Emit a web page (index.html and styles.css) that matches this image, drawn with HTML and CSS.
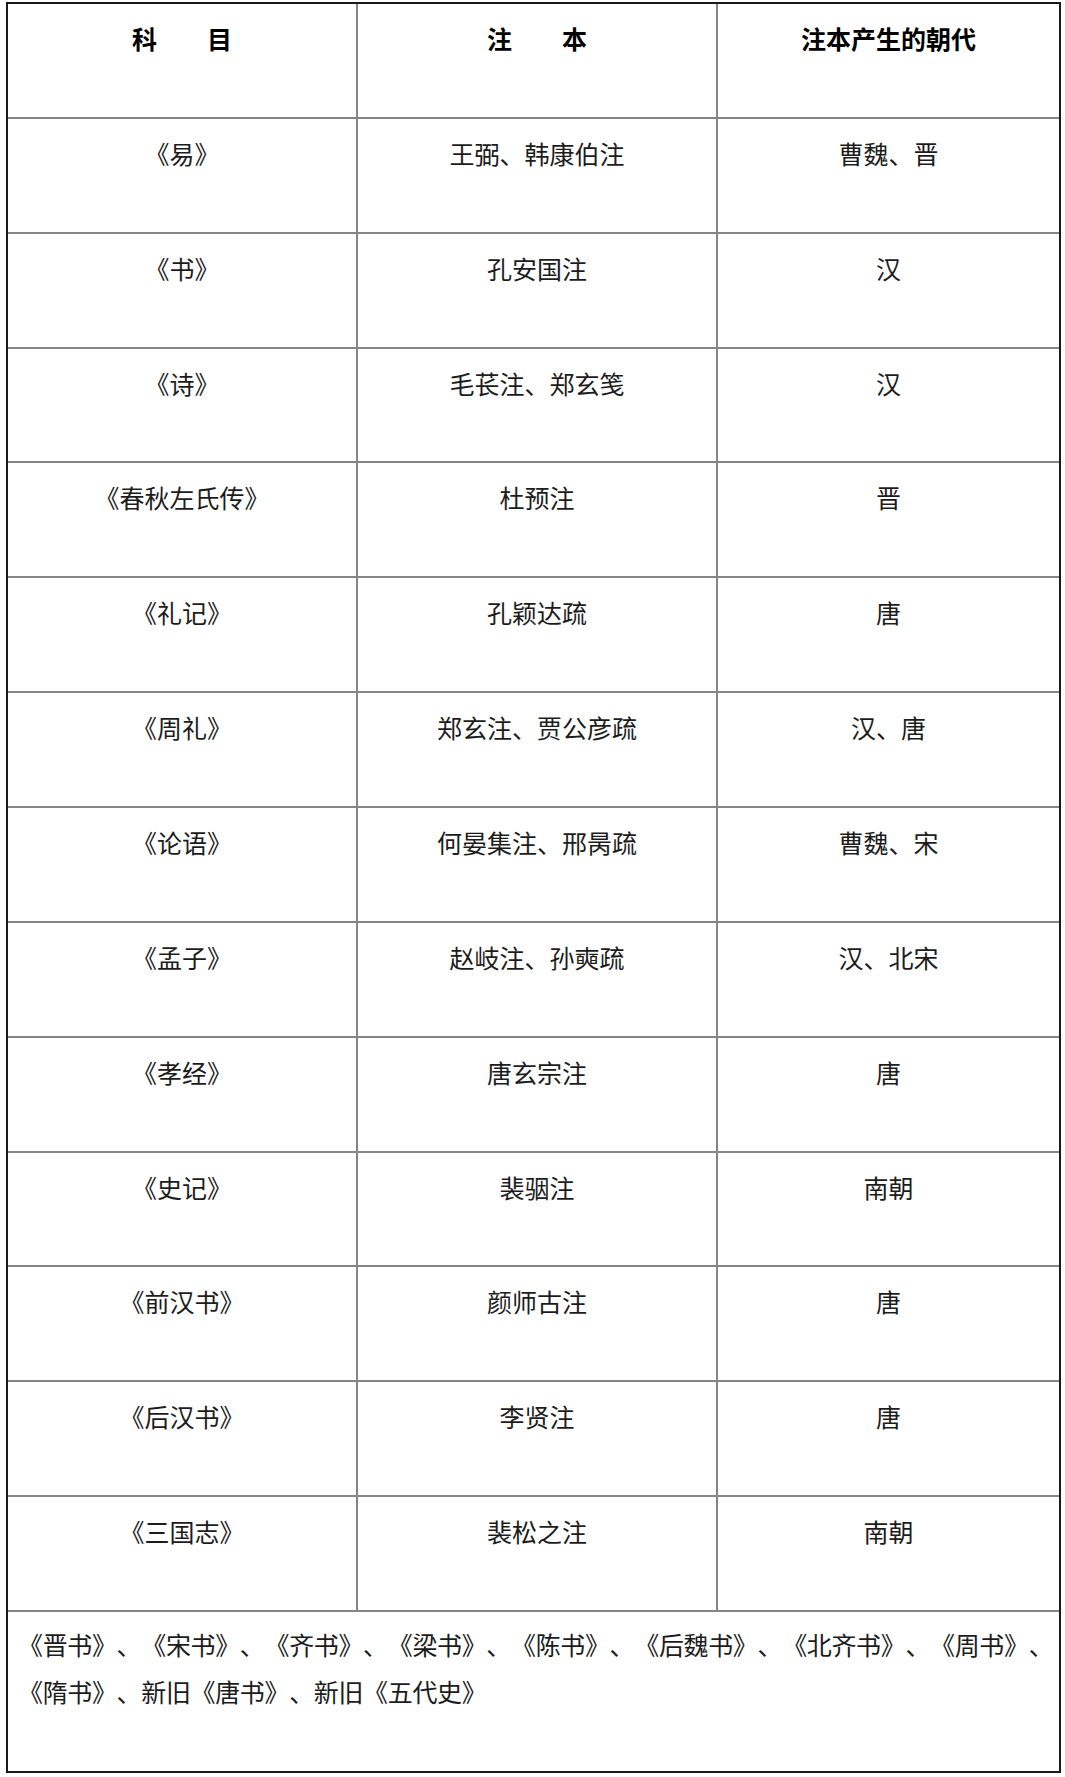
FILE: index.html
```html
<!DOCTYPE html>
<html lang="zh-CN">
<head>
<meta charset="utf-8">
<title>注本表</title>
<link rel="stylesheet" href="styles.css">
</head>
<body>
<div class="sheet">
  <div class="cell head">科&emsp;&emsp;目</div>
  <div class="cell head">注&emsp;&emsp;本</div>
  <div class="cell head last">注本产生的朝代</div>

  <div class="cell">《易》</div>
  <div class="cell">王弼、韩康伯注</div>
  <div class="cell last">曹魏、晋</div>

  <div class="cell">《书》</div>
  <div class="cell">孔安国注</div>
  <div class="cell last">汉</div>

  <div class="cell">《诗》</div>
  <div class="cell">毛苌注、郑玄笺</div>
  <div class="cell last">汉</div>

  <div class="cell">《春秋左氏传》</div>
  <div class="cell">杜预注</div>
  <div class="cell last">晋</div>

  <div class="cell">《礼记》</div>
  <div class="cell">孔颖达疏</div>
  <div class="cell last">唐</div>

  <div class="cell">《周礼》</div>
  <div class="cell">郑玄注、贾公彦疏</div>
  <div class="cell last">汉、唐</div>

  <div class="cell">《论语》</div>
  <div class="cell">何晏集注、邢昺疏</div>
  <div class="cell last">曹魏、宋</div>

  <div class="cell">《孟子》</div>
  <div class="cell">赵岐注、孙奭疏</div>
  <div class="cell last">汉、北宋</div>

  <div class="cell">《孝经》</div>
  <div class="cell">唐玄宗注</div>
  <div class="cell last">唐</div>

  <div class="cell">《史记》</div>
  <div class="cell">裴骃注</div>
  <div class="cell last">南朝</div>

  <div class="cell">《前汉书》</div>
  <div class="cell">颜师古注</div>
  <div class="cell last">唐</div>

  <div class="cell">《后汉书》</div>
  <div class="cell">李贤注</div>
  <div class="cell last">唐</div>

  <div class="cell">《三国志》</div>
  <div class="cell">裴松之注</div>
  <div class="cell last">南朝</div>

  <div class="foot">《晋书》、《宋书》、《齐书》、《梁书》、《陈书》、《后魏书》、《北齐书》、《周书》、<br>《隋书》、新旧《唐书》、新旧《五代史》</div>
</div>
</body>
</html>
```

FILE: styles.css
```css
html, body {
  margin: 0;
  padding: 0;
  background: #ffffff;
}

.sheet {
  margin: 2px 0 0 6px;
  width: 1051px;
  border: 2px solid #1a1a1a;
  display: grid;
  grid-template-columns: 350px 360px 341px;
  grid-template-rows: repeat(14, 114.86px) 159px;
  font-family: "Noto Sans CJK SC", "Noto Sans", sans-serif;
  color: #1c1c1c;
  text-spacing-trim: space-all;
  font-feature-settings: "halt" 0, "palt" 0;
}

.cell {
  box-sizing: border-box;
  border-right: 2px solid #858585;
  border-bottom: 2px solid #858585;
  padding-top: 22px;
  text-align: center;
  font-size: 25px;
  line-height: 25px;
  font-weight: 400;
}

.cell.last {
  border-right: none;
}

.cell.head {
  font-weight: 700;
  color: #000000;
  padding-top: 22px;
}

.foot {
  grid-column: 1 / 4;
  box-sizing: border-box;
  padding: 9px 0 0 10px;
  font-size: 25px;
  line-height: 47px;
  letter-spacing: -0.35px;
  white-space: nowrap;
}
```
